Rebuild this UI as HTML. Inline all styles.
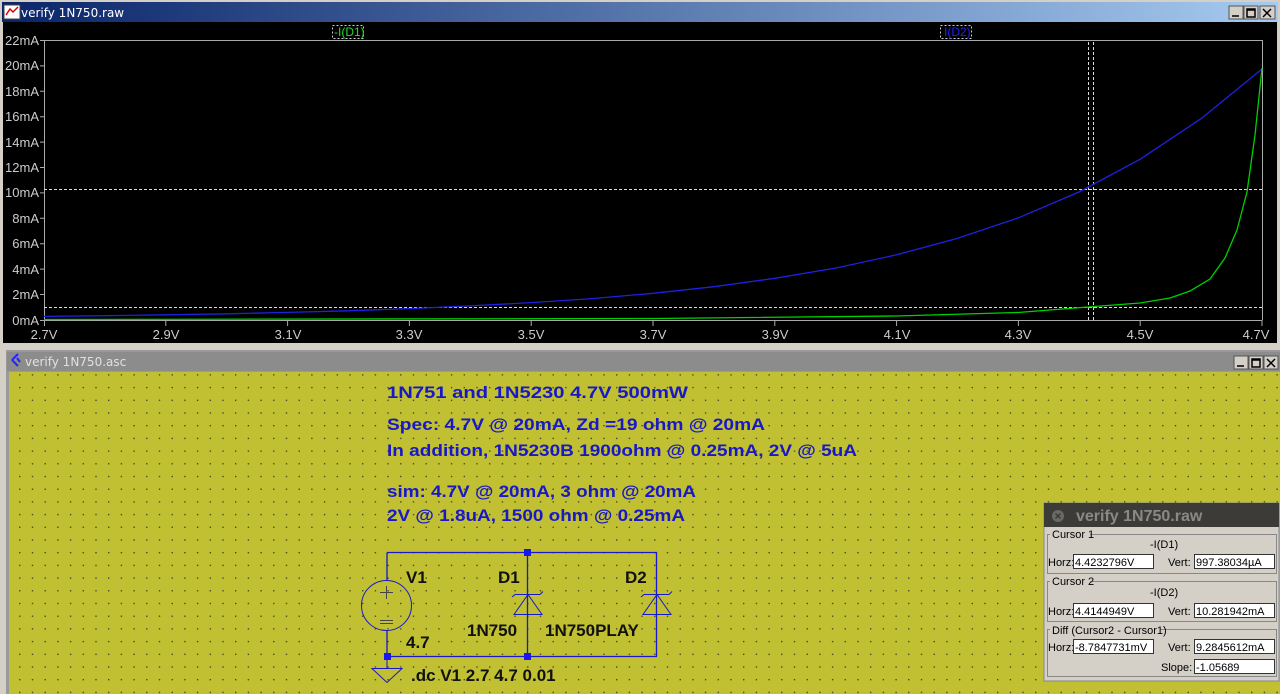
<!DOCTYPE html>
<html><head><meta charset="utf-8"><style>
html,body{margin:0;padding:0;background:#d4d0c8;width:1280px;height:694px;overflow:hidden}
svg{display:block}
</style></head><body>
<svg width="1280" height="694" xmlns="http://www.w3.org/2000/svg" font-family="Liberation Sans, sans-serif" xml:space="preserve">
<defs>
<linearGradient id="tb" x1="0" x2="1"><stop offset="0" stop-color="#0a246a"/><stop offset="1" stop-color="#a6caf0"/></linearGradient>
<pattern id="dots" x="1.5" y="1" width="12.7" height="12.7" patternUnits="userSpaceOnUse"><rect x="5" y="5" width="1.2" height="1.2" fill="#222"/></pattern>
</defs>
<rect x="0" y="0" width="1280" height="346" fill="#d4d0c8"/>
<rect x="2" y="2" width="1276" height="20" fill="url(#tb)"/>
<rect x="4" y="5" width="16" height="14" fill="#fff" stroke="#444" stroke-width="1"/>
<polyline points="6,15 10,9 13,12 18,7" fill="none" stroke="#d00" stroke-width="1.5"/>
<text x="21" y="17" font-size="12" fill="#fff" font-family="DejaVu Sans, sans-serif">verify 1N750.raw</text>
<g fill="#d4d0c8" stroke="#555"><rect x="1229" y="6" width="14" height="13"/><rect x="1244" y="6" width="14" height="13"/><rect x="1260" y="6" width="15" height="13"/></g>
<path d="M1232 16h7M1247 9h8v8h-8zM1247 10h8M1263 9l8 8M1271 9l-8 8" stroke="#000" stroke-width="1.5" fill="none"/>
<rect x="3" y="22" width="1274" height="321" fill="#000"/>
<g stroke="#aaa" stroke-width="1" fill="none">
<path d="M44.5 40.5H1262.5V320M44.5 40V320.5H1262.5"/>
<path d="M40 40.5h4M40 65.9h4M40 91.3h4M40 116.7h4M40 142.1h4M40 167.5h4M40 192.9h4M40 218.3h4M40 243.7h4M40 269.1h4M40 294.5h4M40 320.5h4"/>
<path d="M165.8 320v6M287.6 320v6M409.4 320v6M531.2 320v6M653 320v6M774.8 320v6M896.6 320v6M1018.4 320v6M1140.2 320v6M1262 320v6M44.5 320v6"/>
</g>
<g fill="#ccc" font-size="13" text-anchor="end">
<text x="39" y="45">22mA</text><text x="39" y="70">20mA</text><text x="39" y="96">18mA</text><text x="39" y="121">16mA</text><text x="39" y="147">14mA</text><text x="39" y="172">12mA</text><text x="39" y="197">10mA</text><text x="39" y="223">8mA</text><text x="39" y="248">6mA</text><text x="39" y="274">4mA</text><text x="39" y="299">2mA</text><text x="39" y="325">0mA</text>
</g>
<g fill="#ccc" font-size="13" text-anchor="middle">
<text x="44" y="339">2.7V</text><text x="166" y="339">2.9V</text><text x="288" y="339">3.1V</text><text x="409" y="339">3.3V</text><text x="531" y="339">3.5V</text><text x="653" y="339">3.7V</text><text x="775" y="339">3.9V</text><text x="897" y="339">4.1V</text><text x="1018" y="339">4.3V</text><text x="1140" y="339">4.5V</text><text x="1256" y="339">4.7V</text>
</g>
<g stroke="#ddd" stroke-dasharray="3,2" stroke-width="1">
<path d="M1088.5 42V320M1093.5 42V320M44 189.5H1262M44 307.5H1262"/>
</g>
<polyline fill="none" stroke="#2020e0" stroke-width="1.3" points="44,316.4 105,315.7 165.8,314.8 227,313.8 287.6,312.4 348,310.8 409.4,308.6 470,305.9 531.2,302.6 592,298.6 653,293.3 714,286.7 774.8,278.3 836,268 896.6,254.8 957,238.5 1018.4,217.8 1079,192 1140.2,159.2 1201,118.7 1262,69"/>
<polyline fill="none" stroke="#00d000" stroke-width="1.3" points="44,319.5 653,318.5 896,316 1018,312.5 1088,307 1140,303 1170,298 1190,291 1210,279 1225,258 1237,230 1247,192 1255,135 1262,68"/>
<rect x="332.5" y="25.5" width="31" height="13" fill="none" stroke="#ccc" stroke-dasharray="2,2"/>
<text x="334" y="36" font-size="12" fill="#20e020">-I(D1)</text>
<rect x="940.5" y="25.5" width="31" height="13" fill="none" stroke="#ccc" stroke-dasharray="2,2"/>
<text x="944" y="36" font-size="12" fill="#2020ff">I(D2)</text>

<rect x="0" y="346" width="1280" height="348" fill="#d4d0c8"/>
<rect x="6" y="350" width="1274" height="344" fill="#9a9a9a"/>
<rect x="7" y="352" width="1273" height="19" fill="#8c8c8c"/>
<path d="M12 360l6-6M12 360l6 6M17 358l3 4" stroke="#22f" stroke-width="2" fill="none"/>
<text x="25" y="366" font-size="12" fill="#e0e0e0" font-family="DejaVu Sans, sans-serif">verify 1N750.asc</text>
<g fill="#d4d0c8" stroke="#555"><rect x="1234" y="356" width="14" height="13"/><rect x="1249" y="356" width="14" height="13"/><rect x="1264" y="356" width="14" height="13"/></g>
<path d="M1237 366h7M1252 359h8v8h-8zM1252 360h8M1267 359l8 8M1275 359l-8 8" stroke="#000" stroke-width="1.5" fill="none"/>
<rect x="9" y="372" width="1271" height="322" fill="#c0c032"/>
<rect x="9" y="372" width="1271" height="322" fill="url(#dots)"/>
<g fill="#1818c8" font-size="17" font-weight="bold">
<text x="387" y="398" textLength="301" lengthAdjust="spacingAndGlyphs">1N751 and 1N5230  4.7V 500mW</text>
<text x="387" y="430" textLength="378" lengthAdjust="spacingAndGlyphs">Spec: 4.7V @ 20mA,  Zd =19 ohm @ 20mA</text>
<text x="387" y="456" textLength="470" lengthAdjust="spacingAndGlyphs">In addition, 1N5230B  1900ohm @ 0.25mA, 2V @ 5uA</text>
<text x="387" y="497" textLength="309" lengthAdjust="spacingAndGlyphs">sim: 4.7V @ 20mA, 3 ohm @ 20mA</text>
<text x="387" y="521" textLength="298" lengthAdjust="spacingAndGlyphs">2V @ 1.8uA, 1500 ohm @ 0.25mA</text>
</g>
<g stroke="#1818c8" stroke-width="1.3" fill="none">
<path d="M387 552.5H656.5V656.5H387V630M387 581V552.5M527.5 552V656"/>
</g>
<g stroke="#1818c8" stroke-width="1" fill="none">
<circle cx="386.5" cy="605.5" r="25"/>
<path d="M380 592.5h13M386.5 586v13M380 620.5h13M380 623.5h13" stroke="#444"/>
<path d="M387 656v12M372 668.5h30l-15 14z"/>
<path d="M514 614.5h28l-14-20z M512 597l3-2.5h25l3-3"/>
<path d="M643 614.5h28l-14-20z M641 597l3-2.5h25l3-3"/>
</g>
<g fill="#1818ee"><rect x="524" y="549" width="7" height="7"/><rect x="384" y="653" width="7" height="7"/><rect x="524" y="653" width="7" height="7"/></g>
<g fill="#111" font-size="17" font-weight="bold">
<text x="406" y="583">V1</text><text x="498" y="583">D1</text><text x="625" y="583">D2</text>
<text x="467" y="636">1N750</text><text x="545" y="636">1N750PLAY</text>
<text x="406" y="648">4.7</text>
<text x="411" y="681">.dc V1 2.7  4.7 0.01</text>
</g>
<rect x="1044" y="503" width="235" height="178" fill="#d4d0c8" stroke="#888"/>
<rect x="1044" y="503" width="235" height="24" fill="#3c3b37"/>
<circle cx="1058" cy="516" r="6" fill="#6a6965"/>
<path d="M1055.5 513.5l5 5M1060.5 513.5l-5 5" stroke="#3c3b37" stroke-width="1.5"/>
<text x="1076" y="521" font-size="16" font-weight="bold" fill="#8a8985">verify 1N750.raw</text>
<g fill="none" stroke="#888"><rect x="1047.5" y="534.5" width="229" height="39"/><rect x="1047.5" y="581.5" width="229" height="40"/><rect x="1047.5" y="629.5" width="229" height="47"/></g>
<g font-size="11" fill="#000">
<rect x="1050" y="528" width="40" height="12" fill="#d4d0c8"/><text x="1052" y="538">Cursor 1</text>
<rect x="1050" y="575" width="40" height="12" fill="#d4d0c8"/><text x="1052" y="585">Cursor 2</text>
<rect x="1050" y="623" width="110" height="12" fill="#d4d0c8"/><text x="1052" y="634">Diff (Cursor2 - Cursor1)</text>
<text x="1150" y="548">-I(D1)</text><text x="1150" y="596">-I(D2)</text>
<text x="1048" y="566">Horz:</text><text x="1168" y="566">Vert:</text>
<text x="1048" y="615">Horz:</text><text x="1168" y="615">Vert:</text>
<text x="1048" y="651">Horz:</text><text x="1168" y="651">Vert:</text><text x="1161" y="671">Slope:</text>
</g>
<g fill="#fff" stroke="#333">
<rect x="1073.5" y="554.5" width="80" height="14"/><rect x="1194.5" y="554.5" width="80" height="14"/>
<rect x="1073.5" y="603.5" width="80" height="14"/><rect x="1194.5" y="603.5" width="80" height="14"/>
<rect x="1073.5" y="639.5" width="80" height="14"/><rect x="1194.5" y="639.5" width="80" height="14"/><rect x="1194.5" y="659.5" width="80" height="14"/>
</g>
<g font-size="11" fill="#000">
<text x="1075" y="566">4.4232796V</text><text x="1196" y="566">997.38034µA</text>
<text x="1075" y="615">4.4144949V</text><text x="1196" y="615">10.281942mA</text>
<text x="1075" y="651">-8.7847731mV</text><text x="1196" y="651">9.2845612mA</text><text x="1196" y="671">-1.05689</text>
</g>
</svg>
</body></html>
